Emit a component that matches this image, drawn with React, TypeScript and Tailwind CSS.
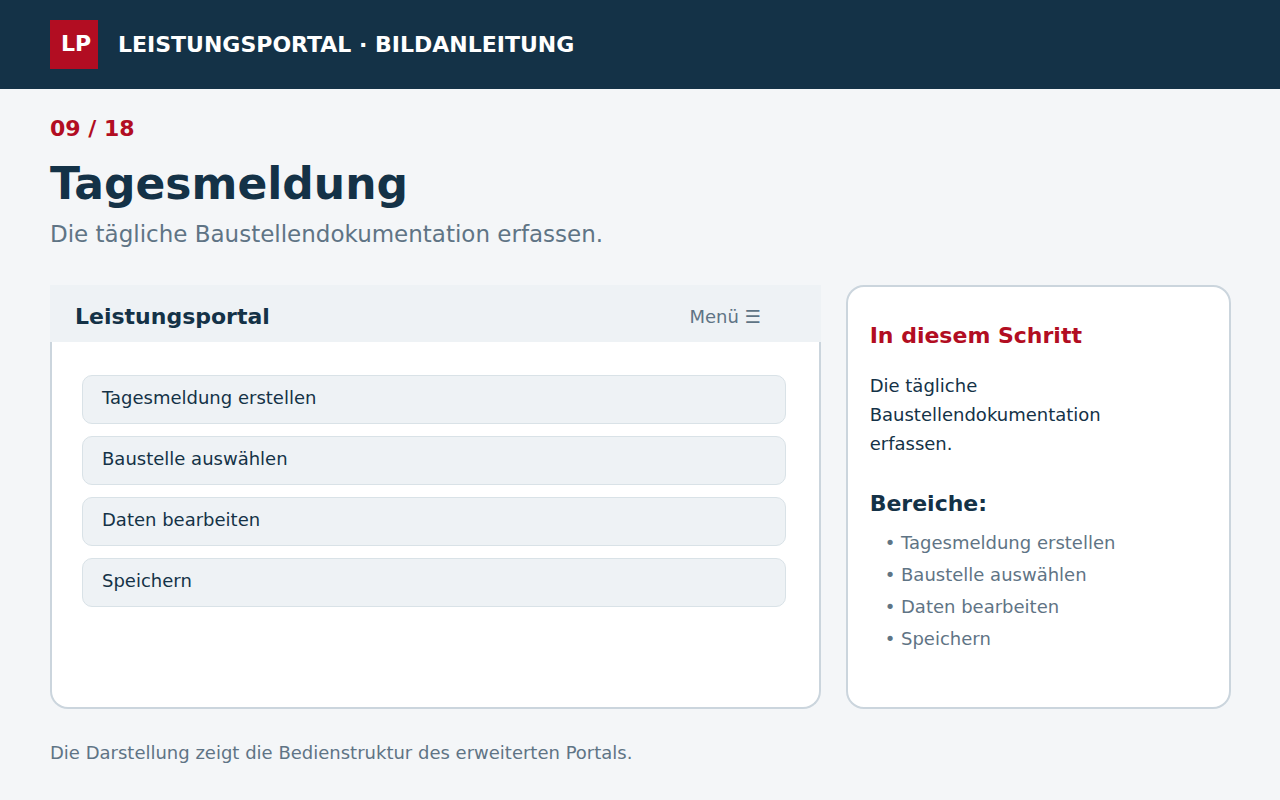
import React from 'react'

const areas = [
  'Tagesmeldung erstellen',
  'Baustelle auswählen',
  'Daten bearbeiten',
  'Speichern',
]

const step = {
  current: '09',
  total: '18',
  title: 'Tagesmeldung',
  description: 'Die tägliche Baustellendokumentation erfassen.',
}

const Header: React.FC = () => (
  <header className="flex items-center gap-5 bg-[#143247] px-[50px] py-5">
    <div className="flex h-[49px] w-12 items-center justify-center bg-[#b20d22] pb-[2px] pl-1 text-[22px] leading-none font-bold text-white">
      LP
    </div>
    <p className="text-[22px] leading-none font-bold text-white">
      LEISTUNGSPORTAL · BILDANLEITUNG
    </p>
  </header>
)

const PortalPreview: React.FC = () => (
  <section className="flex flex-col">
    <div className="flex h-[57px] items-center justify-between bg-[#eef2f5] pt-[6px] pr-[60px] pl-[25px]">
      <h2 className="text-[22px] leading-7 font-bold">Leistungsportal</h2>
      <button type="button" className="text-lg leading-7 text-[#5f7485]">
        Menü ☰
      </button>
    </div>
    <div className="flex grow flex-col gap-3 rounded-b-[18px] border-2 border-t-0 border-[#cbd5dd] bg-white pt-[33px] pr-[33px] pb-[100px] pl-[30px]">
      {areas.map((area) => (
        <button
          key={area}
          type="button"
          className="h-[49px] rounded-[10px] border border-[#d9e2e7] bg-[#eef2f5] px-[19px] pb-1 text-left text-lg"
        >
          {area}
        </button>
      ))}
    </div>
  </section>
)

const StepInfo: React.FC = () => (
  <aside className="rounded-[18px] border-2 border-[#cbd5dd] bg-white px-[22px] pt-[35px] pb-[50px]">
    <h2 className="text-[22px] leading-7 font-bold text-[#b20d22]">In diesem Schritt</h2>
    <p className="mt-[21px] max-w-[300px] text-lg leading-[29px]">{step.description}</p>
    <h3 className="mt-8 text-[22px] leading-7 font-bold">Bereiche:</h3>
    <ul className="mt-[9px] pl-[15px] text-lg leading-8 text-[#5f7485]">
      {areas.map((area) => (
        <li key={area}>• {area}</li>
      ))}
    </ul>
  </aside>
)

const App: React.FC = () => {
  return (
    <div className="min-h-screen bg-[#f4f6f8] font-['DejaVu_Sans',sans-serif] text-[#143247]">
      <Header />

      <main className="pt-[26px] pr-[49px] pb-8 pl-[50px]">
        <p className="text-[22px] leading-7 font-bold text-[#b20d22]">
          {step.current} / {step.total}
        </p>
        <h1 className="mt-[13px] text-[44px] leading-[56px] font-bold">{step.title}</h1>
        <p className="mt-2 text-[23px] leading-7 text-[#5f7485]">{step.description}</p>

        {/* Portal preview next to the step notes */}
        <div className="mt-[37px] grid grid-cols-[2fr_1fr] gap-[25px]">
          <PortalPreview />
          <StepInfo />
        </div>

        <p className="mt-[30px] text-lg leading-7 text-[#5f7485]">
          Die Darstellung zeigt die Bedienstruktur des erweiterten Portals.
        </p>
      </main>
    </div>
  )
}

export default App
